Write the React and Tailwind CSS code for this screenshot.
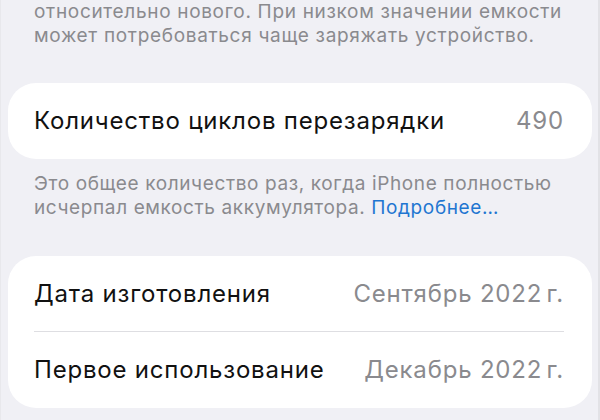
import React from 'react';

function Row({ label, value, divider }) {
  return (
    <div className="relative flex h-[76px] items-center justify-between pl-[26px] pr-[28px] text-[24px] tracking-[0.8px]">
      <span className="text-[#111]">{label}</span>
      <span className="text-[#8a8a8e]">{value}</span>
      {divider && <div className="absolute bottom-0 left-[26px] right-[28px] h-px bg-[#dedee2]" />}
    </div>
  );
}

export default function App() {
  return (
    <div className="h-[420px] w-[600px] overflow-hidden border-l border-r-2 border-l-[#e8e8ec] border-r-[#e2e2e6] bg-[#f0f0f5] font-['Inter',sans-serif]">
      <p className="pl-[33px] text-[19px] leading-[24px] tracking-[0.68px] text-[#8a8a8e]">
        относительно нового. При низком значении емкости
        <br />
        может потребоваться чаще заряжать устройство.
      </p>

      <div className="ml-[7px] mr-[6px] mt-[35px] rounded-[28px] bg-white">
        <Row label="Количество циклов перезарядки" value="490" />
      </div>

      <p className="mt-[13px] pl-[33px] text-[19px] leading-[24px] tracking-[0.62px] text-[#8a8a8e]">
        Это общее количество раз, когда iPhone полностью
        <br />
        исчерпал емкость аккумулятора. <span className="text-[#1f76d1]">Подробнее…</span>
      </p>

      <div className="ml-[7px] mr-[6px] mt-[36px] rounded-[28px] bg-white">
        <Row label="Дата изготовления" value={'Сентябрь 2022\u202Fг.'} divider />
        <Row label="Первое использование" value={'Декабрь 2022\u202Fг.'} />
      </div>
    </div>
  );
}
